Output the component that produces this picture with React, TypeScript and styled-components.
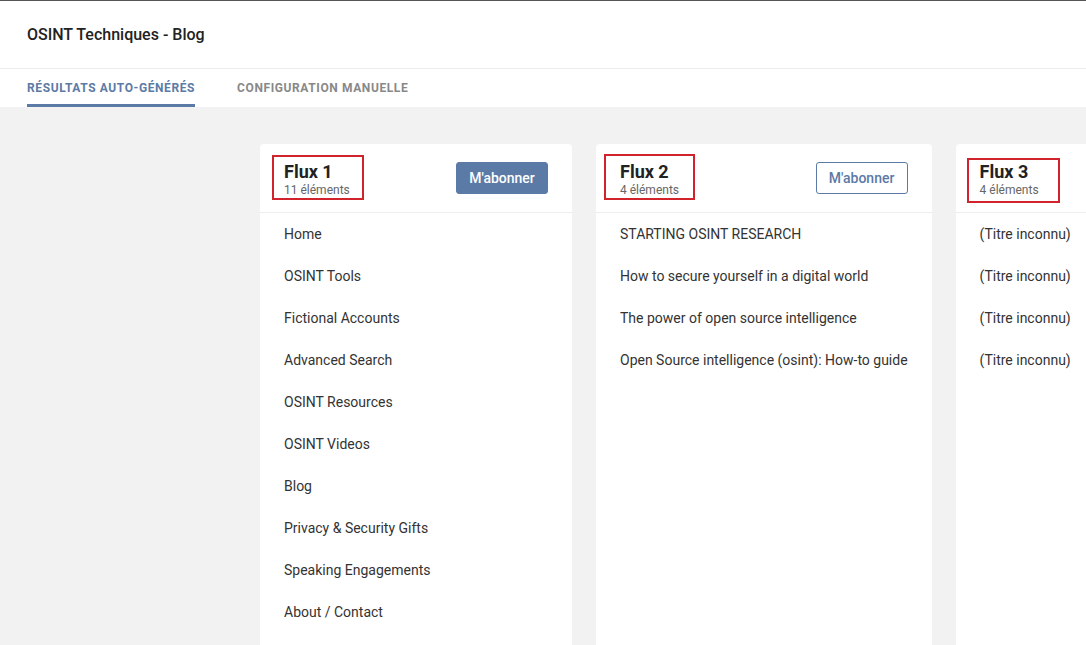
import React from 'react';
import styled, { createGlobalStyle } from 'styled-components';

type Feed = {
  title: string;
  count: number;
  items: string[];
  filled?: boolean;
  mark: { top: number; left: number; right: number; bottom: number };
};

const feeds: Feed[] = [
  {
    title: 'Flux 1',
    count: 11,
    filled: true,
    mark: { top: -3, left: -12, right: -14, bottom: -2 },
    items: [
      'Home',
      'OSINT Tools',
      'Fictional Accounts',
      'Advanced Search',
      'OSINT Resources',
      'OSINT Videos',
      'Blog',
      'Privacy & Security Gifts',
      'Speaking Engagements',
      'About / Contact',
    ],
  },
  {
    title: 'Flux 2',
    count: 4,
    mark: { top: -4, left: -16, right: -16, bottom: -2 },
    items: [
      'STARTING OSINT RESEARCH',
      'How to secure yourself in a digital world',
      'The power of open source intelligence',
      'Open Source intelligence (osint): How-to guide',
    ],
  },
  {
    title: 'Flux 3',
    count: 4,
    mark: { top: 0, left: -13, right: -21, bottom: -5 },
    items: ['(Titre inconnu)', '(Titre inconnu)', '(Titre inconnu)', '(Titre inconnu)'],
  },
];

const GlobalStyle = createGlobalStyle`
  html, body {
    margin: 0;
    padding: 0;
    height: 100%;
    overflow: hidden;
  }
  body {
    font-family: Roboto, "Liberation Sans", Arial, sans-serif;
    background: #f2f2f2;
    color: #333;
  }
`;

export default function App() {
  return (
    <>
      <GlobalStyle />
      <S.Page>
        <S.Header>
          <S.Title>OSINT Techniques - Blog</S.Title>
        </S.Header>
        <S.Tabs>
          <S.Tab $active>Résultats auto-générés</S.Tab>
          <S.Tab>Configuration manuelle</S.Tab>
        </S.Tabs>
        <S.Board>
          {feeds.map((feed) => (
            <S.Card key={feed.title}>
              <S.CardHead>
                <S.Heading>
                  <S.FeedName>{feed.title}</S.FeedName>
                  <S.Count>{feed.count} éléments</S.Count>
                  <S.Mark style={feed.mark} />
                </S.Heading>
                <S.SubscribeButton $filled={feed.filled}>M'abonner</S.SubscribeButton>
              </S.CardHead>
              <S.List>
                {feed.items.map((item, i) => (
                  <S.Item key={i}>{item}</S.Item>
                ))}
              </S.List>
            </S.Card>
          ))}
        </S.Board>
      </S.Page>
    </>
  );
}

const S = {
  Page: styled.div`
    display: flex;
    flex-direction: column;
    height: 100vh;
    border-top: 1px solid #555;
    box-sizing: border-box;
  `,
  Header: styled.header`
    background: #fff;
    height: 67px;
    display: flex;
    align-items: center;
    padding: 0 27px;
    border-bottom: 1px solid #ececec;
  `,
  Title: styled.h1`
    margin: 0;
    font-size: 16px;
    font-weight: 500;
    color: #222;
  `,
  Tabs: styled.nav`
    background: #fff;
    display: flex;
    gap: 42px;
    padding: 0 27px;
    height: 38px;
  `,
  Tab: styled.div<{ $active?: boolean }>`
    display: flex;
    align-items: center;
    font-size: 12px;
    font-weight: 700;
    letter-spacing: 0.6px;
    text-transform: uppercase;
    color: ${(p) => (p.$active ? '#5c7aa6' : '#888')};
    border-bottom: 3px solid ${(p) => (p.$active ? '#5c7aa6' : 'transparent')};
    padding-top: 3px;
    box-sizing: border-box;
  `,
  Board: styled.main`
    flex: 1;
    display: flex;
    align-items: flex-start;
    gap: 24px;
    padding: 37px 0 0 260px;
    overflow: hidden;
  `,
  Card: styled.section`
    flex: none;
    min-width: 312px;
    background: #fff;
    border-radius: 4px;
    min-height: 600px;
    box-sizing: border-box;
  `,
  CardHead: styled.div`
    display: flex;
    align-items: center;
    justify-content: space-between;
    gap: 24px;
    height: 68px;
    padding: 0 24px;
    border-bottom: 1px solid #eee;
  `,
  Heading: styled.div`
    position: relative;
    display: flex;
    flex-direction: column;
    padding-top: 4px;
  `,
  FeedName: styled.div`
    font-size: 18px;
    font-weight: 700;
    color: #222;
    line-height: 20px;
  `,
  Count: styled.div`
    font-size: 12px;
    color: #666;
    line-height: 16px;
  `,
  Mark: styled.div`
    position: absolute;
    border: 2px solid #d0232b;
    pointer-events: none;
  `,
  SubscribeButton: styled.button<{ $filled?: boolean }>`
    width: 92px;
    height: 32px;
    border-radius: 3px;
    font-family: inherit;
    font-size: 14px;
    font-weight: 500;
    cursor: pointer;
    border: 1px solid #5c7aa6;
    background: ${(p) => (p.$filled ? '#5c7aa6' : '#fff')};
    color: ${(p) => (p.$filled ? '#fff' : '#5c7aa6')};
  `,
  List: styled.ul`
    list-style: none;
    margin: 0;
    padding: 0 24px;
  `,
  Item: styled.li`
    height: 42px;
    display: flex;
    align-items: center;
    font-size: 14px;
    color: #333;
    white-space: nowrap;
  `,
};
